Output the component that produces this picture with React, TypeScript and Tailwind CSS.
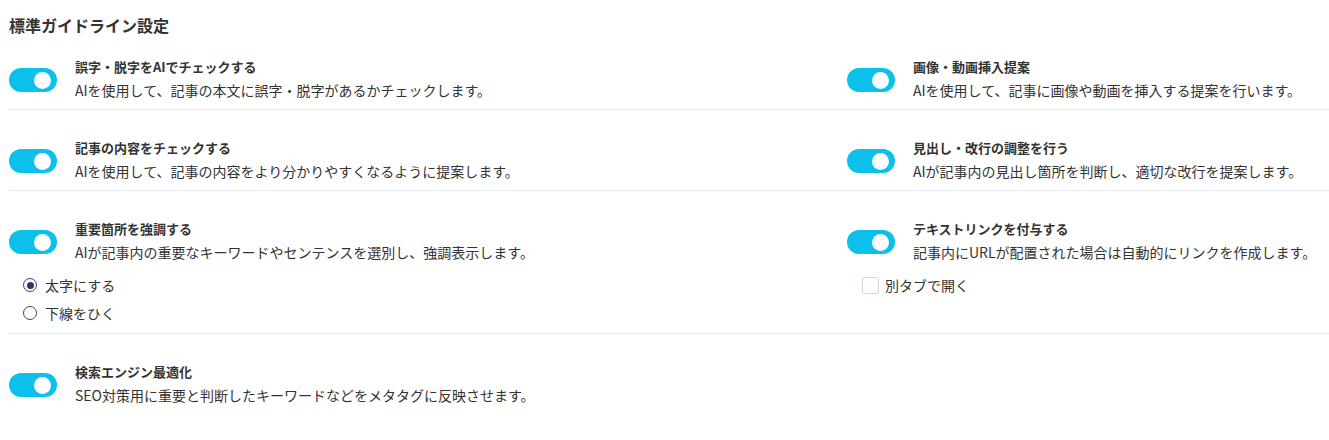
import { useState } from "react";

type Item = {
  title: string;
  desc: string;
};

const Toggle = ({ on, onClick }: { on: boolean; onClick: () => void }) => (
  <button
    onClick={onClick}
    className={`flex h-[24px] w-[48px] shrink-0 items-center rounded-full px-[6px] ${
      on ? "justify-end bg-[#0bc1eb]" : "justify-start bg-[#cfd6e0]"
    }`}
  >
    <span className="block h-[17px] w-[17px] rounded-full bg-white" />
  </button>
);

const Setting = ({ item }: { item: Item }) => {
  const [on, setOn] = useState(true);
  return (
    <div className="flex items-center">
      <Toggle on={on} onClick={() => setOn(!on)} />
      <div className="ml-[18px] whitespace-nowrap">
        <p className="text-[13px] font-bold leading-[20px] text-[#333]">{item.title}</p>
        <p className="text-[14px] leading-[26px] text-[#333]">{item.desc}</p>
      </div>
    </div>
  );
};

const Radio = ({ checked, label, onClick }: { checked: boolean; label: string; onClick: () => void }) => (
  <label onClick={onClick} className="flex h-[28px] cursor-pointer items-center">
    <span className="flex h-[14px] w-[14px] items-center justify-center rounded-full border-[1.5px] border-[#3a4566]">
      {checked && <span className="block h-[7px] w-[7px] rounded-full bg-[#2c3a63]" />}
    </span>
    <span className="ml-[8px] text-[14px] text-[#333]">{label}</span>
  </label>
);

export default function App() {
  const [emphasis, setEmphasis] = useState("bold");
  const [newTab, setNewTab] = useState(false);

  return (
    <div
      className="min-h-[440px] bg-white pl-[9px]"
      style={{ fontFamily: '"Noto Sans CJK JP", "Noto Sans", sans-serif' }}
    >
      <h2 className="pt-[13px] text-[16px] font-bold leading-[24px] text-[#333]">標準ガイドライン設定</h2>

      <div className="grid grid-cols-[838px_1fr] border-b border-[#e6eaf1] pb-[6px] pt-[20px]">
        <Setting item={{ title: "誤字・脱字をAIでチェックする", desc: "AIを使用して、記事の本文に誤字・脱字があるかチェックします。" }} />
        <Setting item={{ title: "画像・動画挿入提案", desc: "AIを使用して、記事に画像や動画を挿入する提案を行います。" }} />
      </div>

      <div className="grid grid-cols-[838px_1fr] border-b border-[#e6eaf1] pb-[6px] pt-[28px]">
        <Setting item={{ title: "記事の内容をチェックする", desc: "AIを使用して、記事の内容をより分かりやすくなるように提案します。" }} />
        <Setting item={{ title: "見出し・改行の調整を行う", desc: "AIが記事内の見出し箇所を判断し、適切な改行を提案します。" }} />
      </div>

      <div className="grid grid-cols-[838px_1fr] border-b border-[#e6eaf1] pb-[6px] pt-[28px]">
        <div>
          <Setting item={{ title: "重要箇所を強調する", desc: "AIが記事内の重要なキーワードやセンテンスを選別し、強調表示します。" }} />
          <div className="mt-[6px] pl-[14px]">
            <Radio checked={emphasis === "bold"} label="太字にする" onClick={() => setEmphasis("bold")} />
            <Radio checked={emphasis === "underline"} label="下線をひく" onClick={() => setEmphasis("underline")} />
          </div>
        </div>
        <div>
          <Setting item={{ title: "テキストリンクを付与する", desc: "記事内にURLが配置された場合は自動的にリンクを作成します。" }} />
          <div className="mt-[6px] pl-[15px]">
            <label onClick={() => setNewTab(!newTab)} className="flex h-[28px] cursor-pointer items-center">
              <span className="flex h-[17px] w-[17px] items-center justify-center rounded-[3px] border border-[#c9d5ea] bg-white text-[11px] text-[#0bc1eb]">
                {newTab ? "✓" : ""}
              </span>
              <span className="ml-[6px] text-[14px] text-[#333]">別タブで開く</span>
            </label>
          </div>
        </div>
      </div>

      <div className="grid grid-cols-[838px_1fr] pb-[6px] pt-[28px]">
        <Setting item={{ title: "検索エンジン最適化", desc: "SEO対策用に重要と判断したキーワードなどをメタタグに反映させます。" }} />
      </div>
    </div>
  );
}
